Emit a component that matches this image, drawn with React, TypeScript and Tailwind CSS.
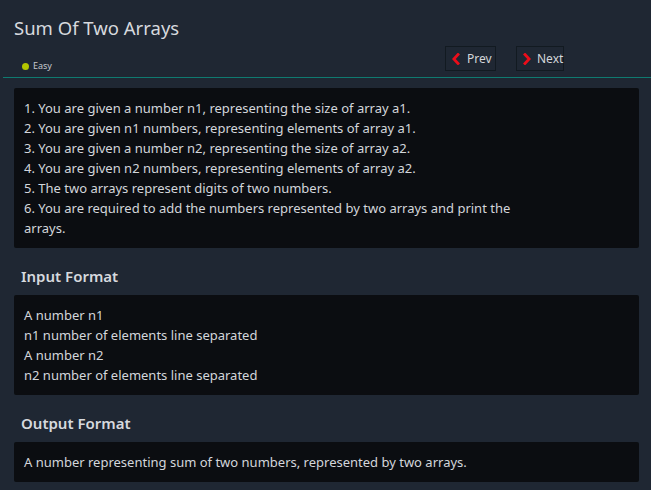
import { useState } from "react";

type Section = {
	title: string;
	lines: string[];
};

const statement = [
	"1. You are given a number n1, representing the size of array a1.",
	"2. You are given n1 numbers, representing elements of array a1.",
	"3. You are given a number n2, representing the size of array a2.",
	"4. You are given n2 numbers, representing elements of array a2.",
	"5. The two arrays represent digits of two numbers.",
	"6. You are required to add the numbers represented by two arrays and print the arrays.",
];

const sections: Section[] = [
	{
		title: "Input Format",
		lines: [
			"A number n1",
			"n1 number of elements line separated",
			"A number n2",
			"n2 number of elements line separated",
		],
	},
	{
		title: "Output Format",
		lines: ["A number representing sum of two numbers, represented by two arrays."],
	},
];

const Chevron = ({ dir }: { dir: "left" | "right" }) => (
	<svg width="8" height="12" viewBox="0 0 8 12" className="shrink-0">
		<path
			d={dir === "left" ? "M6 1.5 L1.8 6 L6 10.5" : "M2 1.5 L6.2 6 L2 10.5"}
			fill="none"
			stroke="#ec0d1a"
			strokeWidth="2.8"
			strokeLinecap="square"
		/>
	</svg>
);

export default function App() {
	const [page, setPage] = useState(0);

	return (
		<div
			className="min-h-[490px] w-full bg-[#1f2733] pb-[8px] text-[#d3d6db]"
			style={{ fontFamily: '"Noto Sans", "Open Sans", sans-serif' }}
		>
			<div className="px-[14px] pt-[14px]">
				<h1 className="text-[18.5px] leading-[28px] font-normal text-[#d6d9de]">
					Sum Of Two Arrays
				</h1>
			</div>
			<div className="flex h-[35px] items-start justify-between pr-[87px]">
				<div className="flex items-center gap-[4px] pl-[22px] pt-[18px]">
					<span className="h-[7px] w-[7px] rounded-full bg-[#b3c500]" />
					<span className="text-[9px] leading-[12px] text-[#c4c7cc]">Easy</span>
				</div>
				<div className="flex gap-[20px] pt-[4px]">
					<button
						type="button"
						onClick={() => setPage(page - 1)}
						className="flex h-[25px] w-[51px] items-center gap-[7px] border border-solid border-[#121a21] pl-[6px] text-[12px] text-[#d3d6da]"
					>
						<Chevron dir="left" />
						Prev
					</button>
					<button
						type="button"
						onClick={() => setPage(page + 1)}
						className="flex h-[25px] w-[48px] items-center gap-[6px] border border-solid border-[#121a21] pl-[6px] text-[12px] text-[#d3d6da]"
					>
						<Chevron dir="right" />
						Next
					</button>
				</div>
			</div>
			<div className="ml-[3px] h-px bg-[#0f7a70]" />

			<div className="ml-[14px] mr-[12px] mt-[10px]">
				<div className="rounded-[2px] bg-[#0b0d11] p-[10px] text-[13px] leading-[20px]">
					{statement.map((line) => (
						<p key={line} className="max-w-[490px]">
							{line}
						</p>
					))}
				</div>

				{sections.map((section) => (
					<div key={section.title}>
						<h2 className="pl-[7px] pt-[18px] pb-[9px] text-[15px] leading-[20px] font-semibold text-[#d6d9de]">
							{section.title}
						</h2>
						<div className="rounded-[2px] bg-[#0b0d11] p-[10px] text-[13px] leading-[20px]">
							{section.lines.map((line) => (
								<p key={line}>{line}</p>
							))}
						</div>
					</div>
				))}
			</div>
		</div>
	);
}
